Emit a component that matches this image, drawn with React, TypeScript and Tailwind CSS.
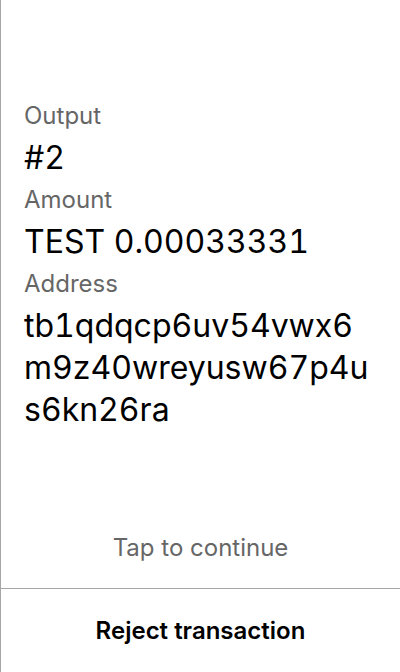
import React from "react";

const Field = ({ label, value }: { label: string; value: string }) => (
    <>
        <div className="text-[24px] leading-[42px] text-[#666666]">{label}</div>
        <div className="text-[32px] leading-[42px] text-black break-all tabular-nums">{value}</div>
    </>
);

const App = () => {
    return (
        <div
            className="flex flex-col w-[400px] h-[672px] bg-white border-l border-[#a6a6a6]"
            style={{ fontFamily: "Inter, 'Noto Sans', sans-serif" }}
        >
            <div className="flex flex-col flex-1 pl-[23px] pr-6 pt-[95px]">
                <Field label="Output" value="#2" />
                <Field label="Amount" value="TEST 0.00033331" />
                <Field label="Address" value="tb1qdqcp6uv54vwx6m9z40wreyusw67p4us6kn26ra" />
            </div>
            <div className="text-center text-[24px] leading-[28px] text-[#666666] pb-[26px]">
                Tap to continue
            </div>
            <div className="h-[84px] flex items-center justify-center border-t border-[#a6a6a6]">
                <span className="text-[24px] font-semibold text-black">Reject transaction</span>
            </div>
        </div>
    );
};

export default App;
